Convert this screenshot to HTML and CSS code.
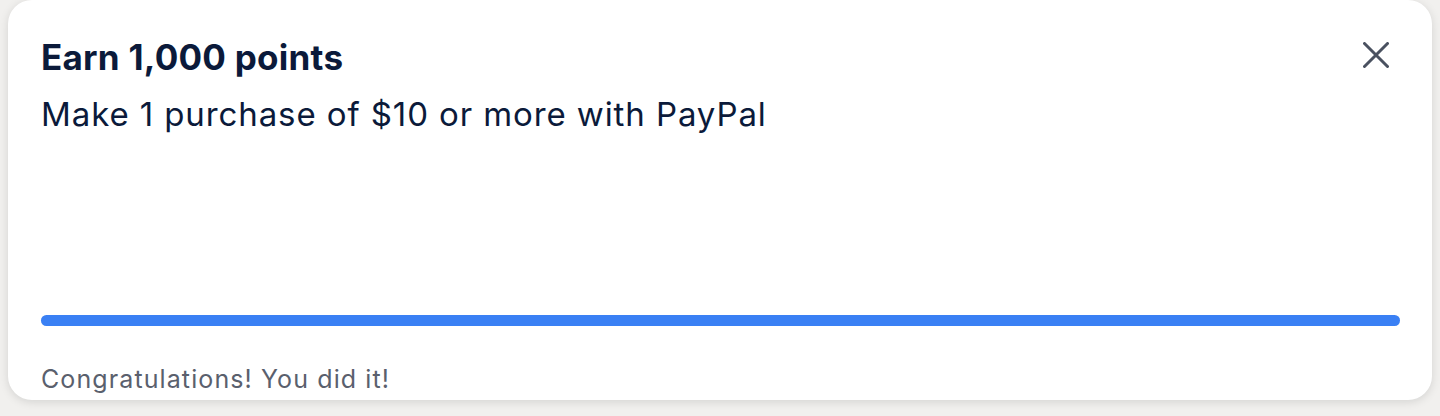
FILE: index.html
```html
<!DOCTYPE html>
<html lang="en">

<head>
    <meta charset="UTF-8">
    <meta name="viewport" content="width=device-width, initial-scale=1.0">
    <title>Earn points</title>
    <link rel="stylesheet" href="styles.css">
</head>

<body>
    <div class="offer-card">
        <div class="offer-head">
            <div class="offer-text">
                <h1>Earn 1,000 points</h1>
                <p class="offer-desc">Make 1 purchase of $10 or more with PayPal</p>
            </div>
            <button class="close-btn" aria-label="Close">
                <svg width="26" height="26" viewBox="0 0 26 26">
                    <path d="M1.5 1.5 L24.5 24.5 M24.5 1.5 L1.5 24.5" stroke="#4a5160" stroke-width="3" stroke-linecap="round" fill="none" />
                </svg>
            </button>
        </div>
        <div class="progress">
            <div class="progress-fill" style="width: 100%"></div>
        </div>
        <p class="offer-status">Congratulations! You did it!</p>
    </div>
</body>

</html>
```

FILE: styles.css
```css
/* Estilos generales */
body {
    margin: 0;
    padding: 0 8px;
    background-color: #f1f0ee;
    font-family: Inter, "Noto Sans", sans-serif;
    color: #0b1a3a;
    height: 416px;
    overflow: hidden;
}

.offer-card {
    height: 400px;
    box-sizing: border-box;
    background-color: #fff;
    border-radius: 24px;
    box-shadow: 0 2px 10px rgba(0, 0, 0, 0.12);
    padding: 37px 32px 0 33px;
    display: flex;
    flex-direction: column;
}

.offer-head {
    display: flex;
    justify-content: space-between;
    align-items: flex-start;
}

h1 {
    margin: 0;
    font-size: 35px;
    font-weight: 700;
    line-height: 40px;
    letter-spacing: 0.25px;
}

.offer-desc {
    margin: 17px 0 0;
    font-size: 33px;
    line-height: 40px;
    letter-spacing: 0.9px;
}

.close-btn {
    background: none;
    border: none;
    padding: 0;
    margin: 5px 11px 0 0;
    cursor: pointer;
    width: 26px;
    height: 26px;
}

.close-btn svg {
    display: block;
}

.progress {
    margin-top: auto;
    height: 11px;
    border-radius: 6px;
    background-color: #e6e9ef;
}

.progress-fill {
    height: 100%;
    border-radius: 6px;
    background-color: #3a80f4;
}

.offer-status {
    margin: 38px 0 6px;
    font-size: 25px;
    line-height: 30px;
    letter-spacing: 1.1px;
    color: #5a606d;
}
```
